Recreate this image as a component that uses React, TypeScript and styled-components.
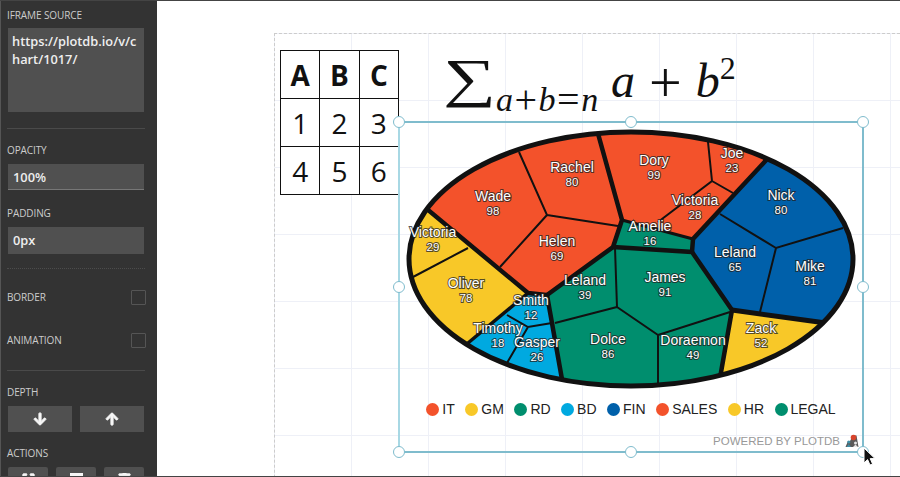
import { createGlobalStyle } from "styled-components";
import styled from "styled-components";
import { FaArrowDown, FaArrowUp, FaExpand, FaSquareFull, FaTrash } from "react-icons/fa";

const GlobalStyle = createGlobalStyle`
	html, body {
		margin: 0;
		padding: 0;
		background: #fff;
	}
`;

const Page = styled.div`
	display: flex;
	width: 900px;
	height: 477px;
	overflow: hidden;
	box-sizing: border-box;
	border-top: 1px solid #444;
	border-bottom: 1px solid #444;
	font-family: "Open Sans", sans-serif;
`;

const Sidebar = styled.aside`
	flex: none;
	width: 157px;
	box-sizing: border-box;
	padding: 8px 13px 0 6px;
	background: #333;
	border-left: 1px solid #555;
	overflow: hidden;
`;

const Label = styled.div`
	font-size: 10px;
	line-height: 12px;
	letter-spacing: -0.1px;
	color: #ccc;
`;

const SourceBox = styled.div`
	width: 136px;
	height: 84px;
	margin: 7px 0 0 1px;
	box-sizing: border-box;
	padding: 4px;
	background: #505050;
	font-size: 12.8px;
	font-weight: 600;
	line-height: 18px;
	color: #eee;
	word-break: break-all;
`;

const Divider = styled.hr<{ $dotted?: boolean; $gap: number }>`
	width: 138px;
	margin: ${(props) => props.$gap}px 0 0;
	border: 0;
	border-top: 1px ${(props) => (props.$dotted ? "dotted #4c4c4c" : "solid #4a4a4a")};
`;

const FieldLabel = styled(Label)<{ $top: number }>`
	margin-top: ${(props) => props.$top}px;
`;

const TextInput = styled.div<{ $underline?: boolean; $height: number }>`
	width: 136px;
	height: ${(props) => props.$height}px;
	margin: 8px 0 0 1px;
	box-sizing: border-box;
	padding-left: 5px;
	background: #505050;
	border-bottom: ${(props) => (props.$underline ? "1px solid #777" : "0")};
	font-size: 12.8px;
	font-weight: 600;
	line-height: ${(props) => props.$height}px;
	color: #eee;
`;

const CheckRow = styled.div<{ $top: number }>`
	display: flex;
	align-items: center;
	justify-content: space-between;
	width: 139px;
	margin-top: ${(props) => props.$top}px;
	height: 16px;
`;

const CheckBox = styled.span`
	width: 15px;
	height: 15px;
	box-sizing: border-box;
	border: 1px solid #555;
	border-radius: 1px;
`;

const ButtonRow = styled.div`
	display: flex;
	gap: 8px;
	margin: 8px 0 0 1px;
	width: 136px;
`;

const IconButton = styled.button`
	flex: 1;
	height: 26px;
	padding: 0;
	display: flex;
	align-items: center;
	justify-content: center;
	border: 0;
	background: #505050;
	color: #f6f6f6;
	font-size: 14px;
	svg {
		stroke: currentColor;
		stroke-width: 36;
	}
`;

const ActionButton = styled(IconButton)`
	flex: none;
	width: 40px;
	border-radius: 2px;
	align-items: flex-start;
	padding-top: 6px;
	font-size: 13px;
`;

const Workspace = styled.main`
	flex: 1;
	padding: 32px 0 0 117px;
	background: #fff;
`;

const Canvas = styled.div`
	position: relative;
	height: 500px;
	box-sizing: border-box;
	border-top: 1px dashed #ccc;
	border-left: 1px dashed #ccc;
	background-image: linear-gradient(to right, transparent 76px, #eef0f7 76px),
		linear-gradient(to bottom, transparent 66px, #eef0f7 66px);
	background-size: 77px 67px;
`;

const DataTable = styled.table`
	position: absolute;
	left: 5px;
	top: 16px;
	width: 119px;
	table-layout: fixed;
	border-collapse: collapse;
	background: #fff;
`;

const Cell = styled.td<{ $head?: boolean }>`
	height: 47px;
	padding: 0;
	border: 1px solid #111;
	text-align: center;
	font-size: 28px;
	font-weight: ${(props) => (props.$head ? 700 : 400)};
	color: #111;
`;

const Formula = styled.div`
	position: absolute;
	left: 170px;
	top: 8px;
	width: 300px;
	height: 80px;
	font-family: "Liberation Serif", serif;
	color: #111;
	white-space: nowrap;
`;

const Sigma = styled.span`
	position: absolute;
	left: -2px;
	top: -4px;
	font-size: 53px;
	line-height: 80px;
	transform: scaleX(1.4);
	transform-origin: left center;
`;

const Subscript = styled.span`
	position: absolute;
	left: 51px;
	top: 40px;
	font-size: 34px;
	line-height: 36px;
	font-style: italic;
	letter-spacing: 1.5px;
`;

const SubOperator = styled.span`
	font-size: 40px;
	line-height: 0;
	font-style: normal;
	vertical-align: -2px;
`;

const Main = styled.span`
	position: absolute;
	left: 166px;
	top: 11px;
	font-size: 48px;
	line-height: 56px;
	font-style: italic;
`;

const Plain = styled.span`
	font-size: 58px;
	line-height: 0;
	font-style: normal;
	vertical-align: -5px;
	margin: 0 14px;
`;

const Power = styled.sup`
	font-size: 32px;
	line-height: 0;
	font-style: normal;
	vertical-align: 18px;
`;

const Frame = styled.section`
	position: absolute;
	left: 123px;
	top: 87px;
	width: 466px;
	height: 332px;
	box-sizing: border-box;
	display: flex;
	flex-direction: column;
	border: 2px solid #7fbccd;
	border-left-color: #a8d8e4;
`;

const ChartSvg = styled.svg`
	display: block;
	flex: none;
	margin: -1px;
	width: 464px;
	height: 275px;
`;

const Legend = styled.ul`
	display: flex;
	justify-content: center;
	gap: 10.5px;
	margin: 4px 0 0;
	padding: 0;
	list-style: none;
	font-family: "Liberation Sans", sans-serif;
	font-size: 14px;
	line-height: 18px;
	color: #222;
`;

const LegendItem = styled.li`
	display: flex;
	align-items: center;
	gap: 3px;
`;

const Dot = styled.span<{ $color: string }>`
	width: 13px;
	height: 13px;
	border-radius: 50%;
	background: ${(props) => props.$color};
`;

const Powered = styled.div`
	display: flex;
	align-items: center;
	justify-content: flex-end;
	gap: 5px;
	margin-top: 15px;
	padding-right: 3px;
	font-family: "Liberation Sans", sans-serif;
	font-size: 11.5px;
	line-height: 16px;
	color: #999;
`;

const HandleLayer = styled.div`
	position: absolute;
	inset: -1px;
`;

const Handle = styled.span<{ $x: number; $y: number }>`
	position: absolute;
	left: ${(props) => props.$x}%;
	top: ${(props) => props.$y}%;
	width: 12px;
	height: 12px;
	box-sizing: border-box;
	transform: translate(-50%, -50%);
	border: 1.5px solid #7fbccd;
	border-radius: 50%;
	background: #fff;
`;

const Cursor = styled.svg`
	position: absolute;
	left: 588px;
	top: 413px;
`;

const RED = "#f3522b";
const YELLOW = "#f8c828";
const GREEN = "#008e6e";
const SKY = "#00a9e0";
const BLUE = "#0060aa";

const regions = [
	{ color: YELLOW, points: "410,195 528,293 468,343 440,367 390,400 390,190" },
	{ color: RED, points: "410,195 528,293 547,295 613,247 622,220 693,239 766,160 790,100 390,100" },
	{ color: GREEN, points: "622,220 693,239 692,252 732,310 720,378 715,400 563,400 563,380 547,295 613,247" },
	{ color: BLUE, points: "693,239 766,160 790,100 870,100 870,330 823,322 732,310 692,252" },
	{ color: YELLOW, points: "732,310 823,322 860,327 700,400 720,378" },
	{ color: SKY, points: "528,293 547,295 563,380 563,400 440,400 440,367 468,343" },
];

const thickLines = [
	{ width: 4.5, d: "M410 195L528 293L547 295L563 385" },
	{ width: 3.5, d: "M528 293L468 343" },
	{ width: 4.5, d: "M597 130L622 220L613 247L547 295" },
	{ width: 4.5, d: "M613 247L692 252L732 310L720 378" },
	{ width: 3, d: "M622 220L693 239" },
	{ width: 4.5, d: "M770 156L693 239L692 252" },
	{ width: 5, d: "M732 310L826 323" },
];

const thinLines =
	"M519 152L547 215L500 267M547 215L618 226M708 142L712 181L658 222M712 181L733 193M720 214L776 248L843 228M776 248L760 312M730 312L658 335L658 385M658 335L617 307L615 248M617 307L555 323M507 315L528 327L552 323M528 327L507 363M468 248L413 277";

const labels = [
	["Wade", 493, 201, 98],
	["Rachel", 572, 172, 80],
	["Dory", 654, 165, 99],
	["Joe", 732, 158, 23],
	["Victoria", 695, 205, 28],
	["Amelie", 650, 231, 16],
	["Nick", 781, 200, 80],
	["Leland", 735, 257, 65],
	["Mike", 810, 271, 81],
	["Helen", 557, 246, 69],
	["Victoria", 433, 237, 29],
	["Oliver", 466, 288, 78],
	["Leland", 585, 285, 39],
	["James", 665, 282, 91],
	["Smith", 531, 305, 12],
	["Timothy", 498, 333, 18],
	["Gasper", 537, 347, 26],
	["Dolce", 608, 344, 86],
	["Doraemon", 693, 345, 49],
	["Zack", 761, 333, 52],
] as const;

const legend = [
	["IT", RED],
	["GM", YELLOW],
	["RD", GREEN],
	["BD", SKY],
	["FIN", BLUE],
	["SALES", RED],
	["HR", YELLOW],
	["LEGAL", GREEN],
];

const handles = [
	[0, 0],
	[50, 0],
	[100, 0],
	[0, 50],
	[100, 50],
	[0, 100],
	[50, 100],
	[100, 100],
];

function Chart() {
	return (
		<ChartSvg viewBox="399 122 464 275">
			<defs>
				<clipPath id="oval">
					<ellipse cx="631" cy="259" rx="222" ry="127" />
				</clipPath>
			</defs>
			<g clipPath="url(#oval)">
				{regions.map((region) => (
					<polygon key={region.points} points={region.points} fill={region.color} />
				))}
				{thickLines.map((line) => (
					<path key={line.d} d={line.d} fill="none" stroke="#111" strokeWidth={line.width} />
				))}
				<path d={thinLines} fill="none" stroke="#111" strokeWidth="2" />
			</g>
			<ellipse cx="631" cy="259" rx="222" ry="127" fill="none" stroke="#111" strokeWidth="5" />
			<g
				fontFamily="'Liberation Sans', sans-serif"
				textAnchor="middle"
				fill="#fff"
				stroke="#222"
				strokeWidth="2"
				strokeOpacity="0.75"
				paintOrder="stroke"
			>
				{labels.map(([name, x, y, value]) => (
					<g key={name + x}>
						<text x={x} y={y} fontSize="14">
							{name}
						</text>
						<text x={x} y={y + 14} fontSize="11.5">
							{value}
						</text>
					</g>
				))}
			</g>
		</ChartSvg>
	);
}

function PlotdbMark() {
	return (
		<svg width="14" height="14" viewBox="0 0 14 14">
			<path d="M5 7L8 1.5H11.5L13.5 13H.5L3 7Z" fill="#5a5a5a" />
			<circle cx="8.5" cy="3.5" r="2.8" fill="#d8442c" />
			<circle cx="3.8" cy="8" r="1.6" fill="#3f8fa8" />
			<path d="M1.5 13L3.8 10L6 13Z" fill="#3f8fa8" />
			<circle cx="10.5" cy="9" r="1.5" fill="#e6e6e6" />
			<path d="M8 13L10.5 10.5L13 13Z" fill="#e6e6e6" />
		</svg>
	);
}

export default function App() {
	return (
		<>
			<GlobalStyle />
			<Page>
				<Sidebar>
					<Label>IFRAME SOURCE</Label>
					<SourceBox>https://plotdb.io/v/chart/1017/</SourceBox>
					<Divider $gap={16} />
					<FieldLabel $top={15}>OPACITY</FieldLabel>
					<TextInput $height={26} $underline>
						100%
					</TextInput>
					<FieldLabel $top={17}>PADDING</FieldLabel>
					<TextInput $height={27}>0px</TextInput>
					<Divider $dotted $gap={14} />
					<CheckRow $top={20}>
						<Label>BORDER</Label>
						<CheckBox />
					</CheckRow>
					<CheckRow $top={27}>
						<Label>ANIMATION</Label>
						<CheckBox />
					</CheckRow>
					<Divider $gap={22} />
					<FieldLabel $top={15}>DEPTH</FieldLabel>
					<ButtonRow>
						<IconButton aria-label="Down">
							<FaArrowDown />
						</IconButton>
						<IconButton aria-label="Up">
							<FaArrowUp />
						</IconButton>
					</ButtonRow>
					<FieldLabel $top={15}>ACTIONS</FieldLabel>
					<ButtonRow>
						<ActionButton aria-label="Fit">
							<FaExpand />
						</ActionButton>
						<ActionButton aria-label="Copy">
							<FaSquareFull />
						</ActionButton>
						<ActionButton aria-label="Delete">
							<FaTrash />
						</ActionButton>
					</ButtonRow>
				</Sidebar>
				<Workspace>
					<Canvas>
						<DataTable>
							<tbody>
								<tr>
									<Cell $head>A</Cell>
									<Cell $head>B</Cell>
									<Cell $head>C</Cell>
								</tr>
								<tr>
									<Cell>1</Cell>
									<Cell>2</Cell>
									<Cell>3</Cell>
								</tr>
								<tr>
									<Cell>4</Cell>
									<Cell>5</Cell>
									<Cell>6</Cell>
								</tr>
							</tbody>
						</DataTable>
						<Formula>
							<Sigma>∑</Sigma>
							<Subscript>
								a<SubOperator>+</SubOperator>b<SubOperator>=</SubOperator>n
							</Subscript>
							<Main>
								a<Plain>+</Plain>b<Power>2</Power>
							</Main>
						</Formula>
						<Frame>
							<Chart />
							<Legend>
								{legend.map(([name, color]) => (
									<LegendItem key={name}>
										<Dot $color={color} />
										{name}
									</LegendItem>
								))}
							</Legend>
							<Powered>
								POWERED BY PLOTDB
								<PlotdbMark />
							</Powered>
							<HandleLayer>
								{handles.map(([x, y]) => (
									<Handle key={`${x}-${y}`} $x={x} $y={y} />
								))}
							</HandleLayer>
						</Frame>
						<Cursor width="14" height="20" viewBox="0 0 14 20">
							<path d="M1 1V16L4.6 12.6L7 18L9.6 17L7.2 11.6H12Z" fill="#111" stroke="#fff" strokeWidth="1" />
						</Cursor>
					</Canvas>
				</Workspace>
			</Page>
		</>
	);
}
